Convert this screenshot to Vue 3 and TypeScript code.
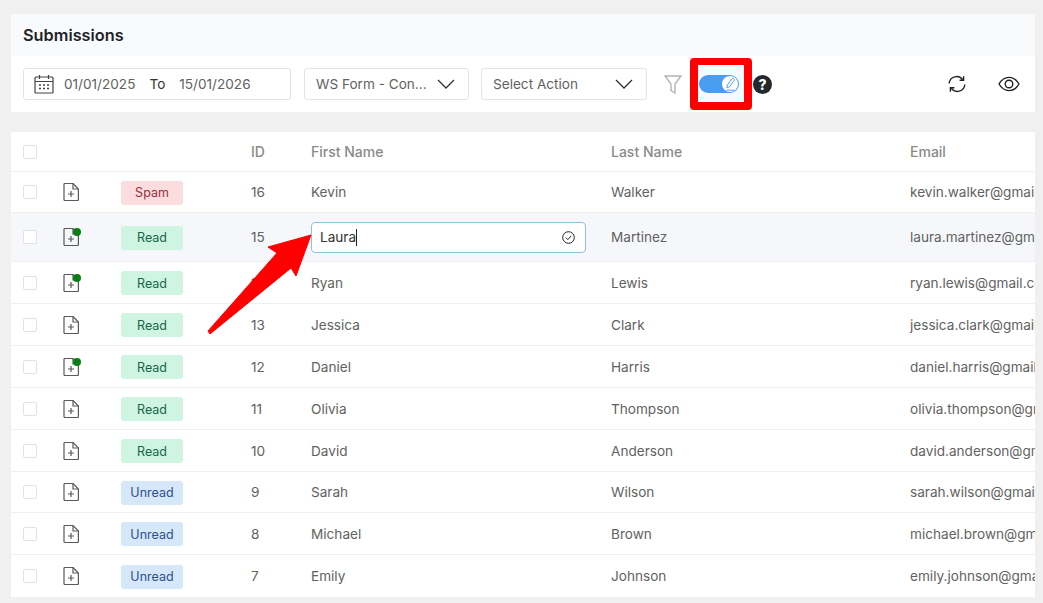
<script setup lang="ts">
type Row = {
  id: number
  first: string
  last: string
  email: string
  status: 'Spam' | 'Read' | 'Unread'
  dot?: boolean
  editing?: boolean
  height: number
}

const rows: Row[] = [
  { id: 16, first: 'Kevin', last: 'Walker', email: 'kevin.walker@gmail.com', status: 'Spam', height: 41 },
  { id: 15, first: 'Laura', last: 'Martinez', email: 'laura.martinez@gmail.com', status: 'Read', dot: true, editing: true, height: 49 },
  { id: 14, first: 'Ryan', last: 'Lewis', email: 'ryan.lewis@gmail.com', status: 'Read', dot: true, height: 42 },
  { id: 13, first: 'Jessica', last: 'Clark', email: 'jessica.clark@gmail.com', status: 'Read', height: 42 },
  { id: 12, first: 'Daniel', last: 'Harris', email: 'daniel.harris@gmail.com', status: 'Read', dot: true, height: 42 },
  { id: 11, first: 'Olivia', last: 'Thompson', email: 'olivia.thompson@gmail.com', status: 'Read', height: 42 },
  { id: 10, first: 'David', last: 'Anderson', email: 'david.anderson@gmail.com', status: 'Read', height: 42 },
  { id: 9, first: 'Sarah', last: 'Wilson', email: 'sarah.wilson@gmail.com', status: 'Unread', height: 41 },
  { id: 8, first: 'Michael', last: 'Brown', email: 'michael.brown@gmail.com', status: 'Unread', height: 42 },
  { id: 7, first: 'Emily', last: 'Johnson', email: 'emily.johnson@gmail.com', status: 'Unread', height: 42 }
]
</script>

<template>
  <div class="page">
    <section class="panel">
      <h1 class="title">Submissions</h1>
      <div class="toolbar">
        <div class="field date-field">
          <svg class="calendar" width="20" height="20" viewBox="0 0 20 20" fill="none" stroke="#444" stroke-width="1.2">
            <rect x="1" y="3" width="18" height="16" rx="1" />
            <path d="M1 7.500h18M5.500 1v4M14.500 1v4" />
            <path d="M5 11h2M9 11h2M13 11h2M5 14.500h2M9 14.500h2M13 14.500h2" stroke-width="1.400" />
          </svg>
          <span>01/01/2025</span>
          <span class="to">To</span>
          <span>15/01/2026</span>
        </div>
        <div class="field select form-select">
          <span>WS Form - Con...</span>
          <svg width="18" height="10" viewBox="0 0 18 10" fill="none" stroke="#333" stroke-width="1.300"><path d="M1 1l8 8 8-8" /></svg>
        </div>
        <div class="field select action-select">
          <span>Select Action</span>
          <svg width="18" height="10" viewBox="0 0 18 10" fill="none" stroke="#333" stroke-width="1.300"><path d="M1 1l8 8 8-8" /></svg>
        </div>
        <svg class="funnel" width="18" height="19" viewBox="0 0 18 19" fill="none" stroke="#b4b4b4" stroke-width="1.400">
          <path d="M1 1h16l-6 8v9l-4-2.500V9z" />
        </svg>
        <div class="highlight">
          <div class="toggle">
            <span class="knob">
              <svg width="14" height="14" viewBox="0 0 16 16" fill="none" stroke="#4a9cf0" stroke-width="1.100">
                <path d="M4 15h9M4.500 12.500l.5-3.200 5.200-7.300a1.300 1.300 0 0 1 1.800-.3l.4.300a1.300 1.300 0 0 1 .3 1.800l-5.200 7.300z" />
              </svg>
            </span>
          </div>
        </div>
        <span class="help">?</span>
        <svg class="refresh" width="18" height="18" viewBox="0 0 18 18" fill="none" stroke="#222" stroke-width="1.400">
          <path d="M1.200 8.500A7.500 7.500 0 0 1 14.800 4.800M16.800 9.500A7.500 7.500 0 0 1 3.200 13.200" />
          <path d="M15.600 1.200v4h-4M2.400 16.800v-4h4" />
        </svg>
        <svg class="eye" width="22" height="16" viewBox="0 0 22 16" fill="none" stroke="#222" stroke-width="1.400">
          <path d="M1 8c2.600-4.400 6-6.600 10-6.600S18.400 3.600 21 8c-2.600 4.400-6 6.600-10 6.600S3.600 12.400 1 8z" />
          <circle cx="11" cy="8" r="3.800" />
        </svg>
      </div>
    </section>

    <section class="table">
      <div class="row head">
        <span class="check"></span>
        <span></span>
        <span></span>
        <span>ID</span>
        <span>First Name</span>
        <span>Last Name</span>
        <span>Email</span>
      </div>
      <div
        v-for="row in rows"
        :key="row.id"
        class="row"
        :class="{ active: row.editing }"
        :style="{ height: row.height + 'px' }"
      >
        <span class="check"></span>
        <span class="doc">
          <svg width="16" height="18" viewBox="0 0 16 18" fill="none" stroke="#5a5a5a" stroke-width="1.200">
            <path d="M1 1.500a1 1 0 0 1 1-1h8l5.400 5.500v10.500a1 1 0 0 1-1 1H2a1 1 0 0 1-1-1z" />
            <path d="M10 .5V6h5.400M8 8v6M5 11h6" />
          </svg>
          <i v-if="row.dot" class="dot"></i>
        </span>
        <span>
          <span class="badge" :class="row.status.toLowerCase()">{{ row.status }}</span>
        </span>
        <span>{{ row.id }}</span>
        <span v-if="row.editing">
          <span class="edit">
            <span class="edit-text">{{ row.first }}<i class="caret"></i></span>
            <svg width="13" height="13" viewBox="0 0 13 13" fill="none" stroke="#222" stroke-width="1">
              <circle cx="6.500" cy="6.500" r="5.800" />
              <path d="M3.800 6.600l2 2 3.500-3.800" />
            </svg>
          </span>
        </span>
        <span v-else>{{ row.first }}</span>
        <span>{{ row.last }}</span>
        <span class="email">{{ row.email }}</span>
      </div>
    </section>

    <svg class="arrow" width="1043" height="603" viewBox="0 0 1043 603">
      <polygon
        points="311,235 268,247 277,253 208,331 210,334 291,268 296,276"
        fill="#f00"
        stroke="#f00"
        stroke-width="1"
        stroke-linejoin="round"
      />
    </svg>
  </div>
</template>

<style scoped>
.page {
  position: relative;
  width: 1043px;
  height: 603px;
  box-sizing: border-box;
  padding: 14px 8px 6px 11px;
  background: #f0f0f0;
  font-family: Inter, 'Liberation Sans', sans-serif;
  font-size: 13.600px;
  color: #626262;
  overflow: hidden;
}

.panel {
  background: #fff;
  margin-bottom: 20px;
}

.title {
  margin: 0;
  height: 42px;
  padding-left: 12px;
  display: flex;
  align-items: center;
  background: #f8fafc;
  font-size: 16.300px;
  font-weight: 600;
  color: #1d2327;
}

.toolbar {
  height: 56px;
  padding-left: 12px;
  display: flex;
  align-items: center;
}

.field {
  height: 32px;
  box-sizing: border-box;
  border: 1px solid #e4e4e4;
  border-radius: 3px;
  display: flex;
  align-items: center;
}

.date-field {
  width: 268px;
  padding-left: 10px;
  margin-right: 13px;
}

.calendar {
  margin-right: 10px;
}

.to {
  margin: 0 14px;
  color: #333;
}

.select {
  justify-content: space-between;
  padding: 0 13px 0 11px;
}

.form-select {
  width: 165px;
  margin-right: 12px;
}

.action-select {
  width: 166px;
  margin-right: 17px;
}

.funnel {
  margin-right: 8px;
}

.highlight {
  width: 62px;
  height: 52px;
  box-sizing: border-box;
  border: 8px solid #f00;
  border-top-width: 7px;
  border-bottom-width: 8px;
  border-radius: 4px;
  background: #f5fafe;
  display: flex;
  align-items: center;
  padding-left: 1px;
}

.toggle {
  width: 40px;
  height: 18px;
  border-radius: 9px;
  background: #4a9cf0;
  display: flex;
  align-items: center;
  justify-content: flex-end;
  padding-right: 1px;
  box-sizing: border-box;
  flex-shrink: 0;
}

.knob {
  width: 16px;
  height: 16px;
  border-radius: 50%;
  background: #fff;
  display: flex;
  align-items: center;
  justify-content: center;
}

.help {
  width: 19px;
  height: 19px;
  margin-left: 1px;
  border-radius: 50%;
  background: #23282d;
  color: #fff;
  font-size: 14px;
  font-weight: 800;
  display: flex;
  align-items: center;
  justify-content: center;
}

.refresh {
  margin-left: auto;
  margin-right: 32px;
}

.eye {
  margin-right: 15px;
}

.table {
  background: #fff;
  overflow: hidden;
}

.row {
  height: 40px;
  box-sizing: border-box;
  padding-left: 12px;
  display: grid;
  grid-template-columns: 40px 58px 130px 60px 300px 299px 200px;
  align-items: center;
  border-bottom: 1px solid #efefef;
  white-space: nowrap;
}

.row:last-child {
  border-bottom: none;
}

.head {
  color: #8a8a8a;
  font-size: 14px;
  font-weight: 500;
}

.active {
  background: #f5f7fa;
}

.check {
  width: 14px;
  height: 14px;
  box-sizing: border-box;
  border: 1px solid #e2e2e2;
  border-radius: 2px;
  background: #fff;
}

.doc {
  position: relative;
  display: block;
  width: 16px;
  height: 18px;
}

.doc svg {
  display: block;
}

.dot {
  position: absolute;
  top: 0;
  left: 10px;
  width: 8px;
  height: 8px;
  border-radius: 50%;
  background: #0a7d16;
}

.badge {
  width: 62px;
  height: 24px;
  margin-top: 1px;
  border-radius: 3px;
  font-size: 12.500px;
  display: flex;
  align-items: center;
  justify-content: center;
}

.spam {
  background: #fbdcdf;
  color: #9a2f3c;
}

.read {
  background: #cff5e2;
  color: #17644a;
}

.unread {
  background: #d6e7fa;
  color: #2c4f8f;
}

.edit {
  width: 275px;
  height: 31px;
  box-sizing: border-box;
  padding: 0 10px 0 8px;
  border: 1.500px solid #8ec3dd;
  border-radius: 4px;
  background: #fff;
  color: #333;
  display: flex;
  align-items: center;
  justify-content: space-between;
}

.edit-text {
  display: flex;
  align-items: center;
}

.caret {
  width: 1px;
  height: 17px;
  background: #222;
}

.arrow {
  position: absolute;
  top: 0;
  left: 0;
  pointer-events: none;
}
</style>

<style>
html,
body {
  margin: 0;
  background: #f0f0f0;
}
</style>
